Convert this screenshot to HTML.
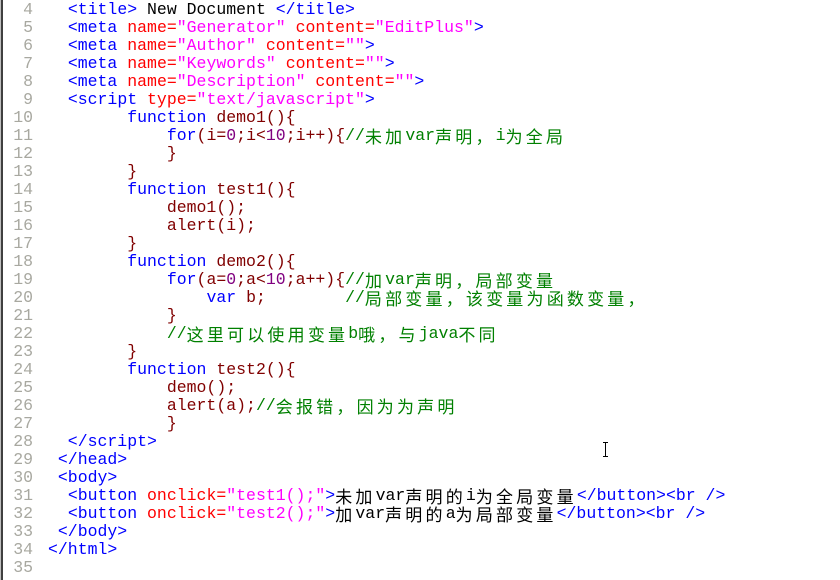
<!DOCTYPE html>
<html><head><meta charset="utf-8"><style>
body{margin:0;width:840px;height:580px;background:#fff;overflow:hidden;position:relative}
.bl{position:absolute;left:0;top:0;width:1px;height:580px;background:#c0c0c0}
.bd{position:absolute;left:1px;top:0;width:2px;height:580px;background:#404040}
.ln{position:absolute;left:0;width:33px;text-align:right;color:#a8a8a0;font:16.5px/18px "Liberation Mono",monospace}
.cd{position:absolute;left:48px;height:18px;white-space:pre;font:16.5px/18px "Liberation Mono",monospace;color:#000}
.t{color:#0000ff}.a{color:#ff0000}.v{color:#ff00ff}.k{color:#0000ff}.f{color:#800000}.n{color:#800080}.g{color:#008000}
.c{font-family:"Noto Sans CJK SC","WenQuanYi Zen Hei",sans-serif;font-size:17px;letter-spacing:3.2px;display:inline-block;height:18px;line-height:18px;vertical-align:top}
</style></head><body>
<div class="bl"></div><div class="bd"></div>
<div class="ln" style="top:1px">4</div><div class="cd" style="top:1px">  <span class="t">&lt;title&gt;</span> New Document <span class="t">&lt;/title&gt;</span></div>
<div class="ln" style="top:19px">5</div><div class="cd" style="top:19px">  <span class="t">&lt;meta</span> <span class="a">name=</span><span class="v">"Generator"</span> <span class="a">content=</span><span class="v">"EditPlus"</span><span class="t">&gt;</span></div>
<div class="ln" style="top:37px">6</div><div class="cd" style="top:37px">  <span class="t">&lt;meta</span> <span class="a">name=</span><span class="v">"Author"</span> <span class="a">content=</span><span class="v">""</span><span class="t">&gt;</span></div>
<div class="ln" style="top:55px">7</div><div class="cd" style="top:55px">  <span class="t">&lt;meta</span> <span class="a">name=</span><span class="v">"Keywords"</span> <span class="a">content=</span><span class="v">""</span><span class="t">&gt;</span></div>
<div class="ln" style="top:73px">8</div><div class="cd" style="top:73px">  <span class="t">&lt;meta</span> <span class="a">name=</span><span class="v">"Description"</span> <span class="a">content=</span><span class="v">""</span><span class="t">&gt;</span></div>
<div class="ln" style="top:91px">9</div><div class="cd" style="top:91px">  <span class="t">&lt;script</span> <span class="a">type=</span><span class="v">"text/javascript"</span><span class="t">&gt;</span></div>
<div class="ln" style="top:109px">10</div><div class="cd" style="top:109px">        <span class="k">function</span> <span class="f">demo1(){</span></div>
<div class="ln" style="top:127px">11</div><div class="cd" style="top:127px">            <span class="k">for</span><span class="f">(i=</span><span class="n">0</span><span class="f">;i&lt;</span><span class="n">10</span><span class="f">;i++){</span><span class="g">//<span class="c">未加</span>var<span class="c">声明，</span>i<span class="c">为全局</span></span></div>
<div class="ln" style="top:145px">12</div><div class="cd f" style="top:145px">            }</div>
<div class="ln" style="top:163px">13</div><div class="cd f" style="top:163px">        }</div>
<div class="ln" style="top:181px">14</div><div class="cd" style="top:181px">        <span class="k">function</span> <span class="f">test1(){</span></div>
<div class="ln" style="top:199px">15</div><div class="cd f" style="top:199px">            demo1();</div>
<div class="ln" style="top:217px">16</div><div class="cd f" style="top:217px">            alert(i);</div>
<div class="ln" style="top:235px">17</div><div class="cd f" style="top:235px">        }</div>
<div class="ln" style="top:253px">18</div><div class="cd" style="top:253px">        <span class="k">function</span> <span class="f">demo2(){</span></div>
<div class="ln" style="top:271px">19</div><div class="cd" style="top:271px">            <span class="k">for</span><span class="f">(a=</span><span class="n">0</span><span class="f">;a&lt;</span><span class="n">10</span><span class="f">;a++){</span><span class="g">//<span class="c">加</span>var<span class="c">声明，局部变量</span></span></div>
<div class="ln" style="top:289px">20</div><div class="cd" style="top:289px">                <span class="k">var</span> <span class="f">b;</span>        <span class="g">//<span class="c">局部变量，该变量为函数变量，</span></span></div>
<div class="ln" style="top:307px">21</div><div class="cd f" style="top:307px">            }</div>
<div class="ln" style="top:325px">22</div><div class="cd g" style="top:325px">            //<span class="c">这里可以使用变量</span>b<span class="c">哦，与</span>java<span class="c">不同</span></div>
<div class="ln" style="top:343px">23</div><div class="cd f" style="top:343px">        }</div>
<div class="ln" style="top:361px">24</div><div class="cd" style="top:361px">        <span class="k">function</span> <span class="f">test2(){</span></div>
<div class="ln" style="top:379px">25</div><div class="cd f" style="top:379px">            demo();</div>
<div class="ln" style="top:397px">26</div><div class="cd" style="top:397px">            <span class="f">alert(a);</span><span class="g">//<span class="c">会报错，因为为声明</span></span></div>
<div class="ln" style="top:415px">27</div><div class="cd f" style="top:415px">            }</div>
<div class="ln" style="top:433px">28</div><div class="cd t" style="top:433px">  &lt;/script&gt;</div>
<div class="ln" style="top:451px">29</div><div class="cd t" style="top:451px"> &lt;/head&gt;</div>
<div class="ln" style="top:469px">30</div><div class="cd t" style="top:469px"> &lt;body&gt;</div>
<div class="ln" style="top:487px">31</div><div class="cd" style="top:487px">  <span class="t">&lt;button</span> <span class="a">onclick=</span><span class="v">"test1();"</span><span class="t">&gt;</span><span class="c">未加</span>var<span class="c">声明的</span>i<span class="c">为全局变量</span><span class="t">&lt;/button&gt;&lt;br /&gt;</span></div>
<div class="ln" style="top:505px">32</div><div class="cd" style="top:505px">  <span class="t">&lt;button</span> <span class="a">onclick=</span><span class="v">"test2();"</span><span class="t">&gt;</span><span class="c">加</span>var<span class="c">声明的</span>a<span class="c">为局部变量</span><span class="t">&lt;/button&gt;&lt;br /&gt;</span></div>
<div class="ln" style="top:523px">33</div><div class="cd t" style="top:523px"> &lt;/body&gt;</div>
<div class="ln" style="top:541px">34</div><div class="cd t" style="top:541px">&lt;/html&gt;</div>
<div class="ln" style="top:559px">35</div>
<div style="position:absolute;left:603px;top:442px;width:5px;height:15px;border-top:1px solid #000;border-bottom:1px solid #000;box-sizing:border-box"></div>
<div style="position:absolute;left:605px;top:442px;width:1px;height:15px;background:#000"></div>
</body></html>
